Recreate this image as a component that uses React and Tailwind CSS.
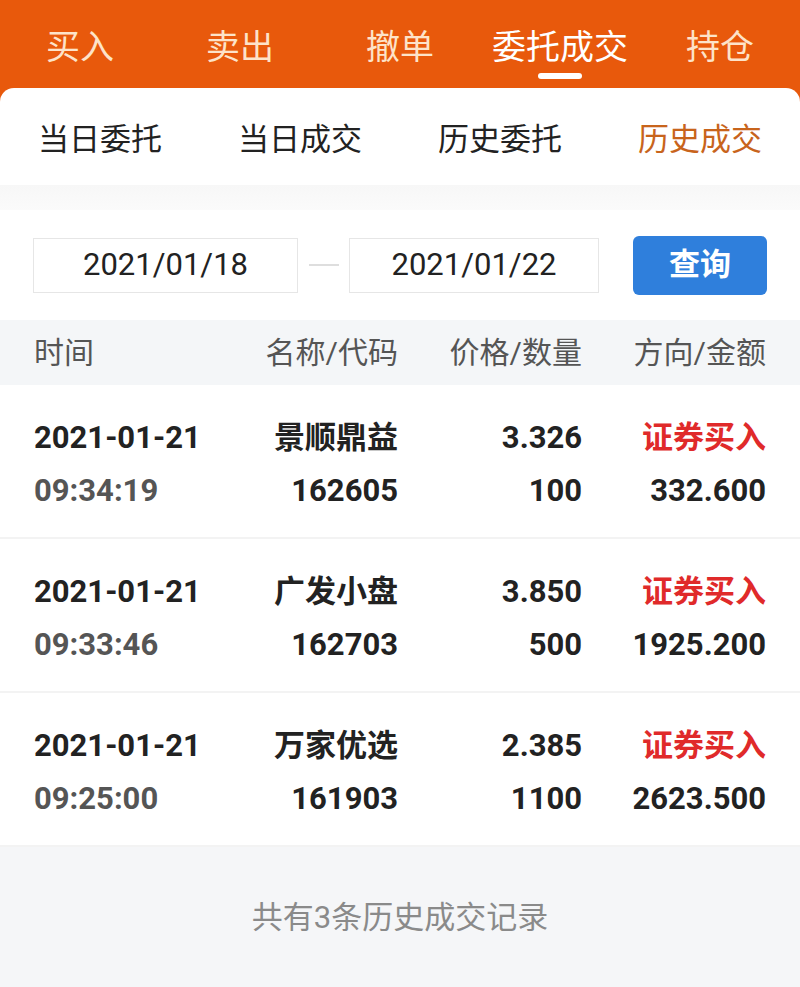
import { useState } from 'react'

const topTabs = ['买入', '卖出', '撤单', '委托成交', '持仓']
const subTabs = ['当日委托', '当日成交', '历史委托', '历史成交']

const trades = [
  { date: '2021-01-21', time: '09:34:19', name: '景顺鼎益', code: '162605', price: '3.326', qty: '100', side: '证券买入', amount: '332.600' },
  { date: '2021-01-21', time: '09:33:46', name: '广发小盘', code: '162703', price: '3.850', qty: '500', side: '证券买入', amount: '1925.200' },
  { date: '2021-01-21', time: '09:25:00', name: '万家优选', code: '161903', price: '2.385', qty: '1100', side: '证券买入', amount: '2623.500' },
]

function TradeRow({ t }) {
  return (
    <div className="flex px-[34px] pt-[26px] pb-[20px] border-b-2 border-[#f3f3f3] font-bold text-[31px] text-[#222]">
      <div className="w-[200px]">
        <div className="h-[53px] leading-[53px]">{t.date}</div>
        <div className="h-[53px] leading-[53px] text-[#555]">{t.time}</div>
      </div>
      <div className="w-[164px] text-right">
        <div className="h-[53px] leading-[53px]">{t.name}</div>
        <div className="h-[53px] leading-[53px]">{t.code}</div>
      </div>
      <div className="w-[184px] text-right">
        <div className="h-[53px] leading-[53px]">{t.price}</div>
        <div className="h-[53px] leading-[53px]">{t.qty}</div>
      </div>
      <div className="w-[184px] text-right">
        <div className="h-[53px] leading-[53px] text-[#e02a2a]">{t.side}</div>
        <div className="h-[53px] leading-[53px]">{t.amount}</div>
      </div>
    </div>
  )
}

export default function App() {
  const [tab, setTab] = useState(3)
  const [sub, setSub] = useState(3)

  return (
    <div className="w-[800px] h-[987px] flex flex-col bg-[#f5f6f8] overflow-hidden" style={{ fontFamily: 'Roboto, "Noto Sans CJK SC", sans-serif' }}>
      {/* top orange tabs */}
      <div className="bg-[#e8590c]">
        <div className="flex h-[88px]">
          {topTabs.map((label, i) => (
            <button
              key={label}
              onClick={() => setTab(i)}
              className={`relative flex-1 text-[34px] leading-none pt-[6px] ${i === tab ? 'text-white' : 'text-[#fde3c9]'}`}
            >
              {label}
              {i === tab && (
                <span className="absolute left-1/2 -translate-x-1/2 bottom-[9px] w-[44px] h-[6px] rounded-full bg-white" />
              )}
            </button>
          ))}
        </div>

        <div className="bg-white rounded-t-[14px]">
          <div className="flex h-[97px]">
            {subTabs.map((label, i) => (
              <button
                key={label}
                onClick={() => setSub(i)}
                className={`flex-1 text-[31px] leading-none pt-[6px] ${i === sub ? 'text-[#c8641c]' : 'text-[#222]'}`}
              >
                {label}
              </button>
            ))}
          </div>
        </div>
      </div>

      <div className="h-[25px] bg-gradient-to-b from-[#f7f7f7] to-[#fbfbfb]" />

      {/* date filter */}
      <div className="bg-white h-[110px] flex items-center px-[33px]">
        <div className="w-[265px] h-[55px] border border-[#e6e6e6] flex items-center justify-center text-[31px] text-[#222]">2021/01/18</div>
        <div className="w-[51px] flex justify-center">
          <div className="w-[30px] h-[2px] bg-[#dedede]" />
        </div>
        <div className="w-[250px] h-[55px] border border-[#e6e6e6] flex items-center justify-center text-[31px] text-[#222]">2021/01/22</div>
        <button className="ml-[34px] w-[134px] h-[59px] rounded-[6px] bg-[#2f7fdc] text-white text-[31px] font-bold">查询</button>
      </div>

      {/* table header */}
      <div className="flex px-[34px] h-[65px] items-center bg-[#f4f6f8] text-[30px] text-[#555]">
        <div className="w-[200px]">时间</div>
        <div className="w-[164px] text-right">名称/代码</div>
        <div className="w-[184px] text-right">价格/数量</div>
        <div className="w-[184px] text-right">方向/金额</div>
      </div>

      <div className="bg-white">
        {trades.map((t) => (
          <TradeRow key={t.code} t={t} />
        ))}
      </div>

      <div className="flex-1 flex justify-center pt-[48px] text-[31px] text-[#8a8a8a]">
        共有3条历史成交记录
      </div>
    </div>
  )
}
